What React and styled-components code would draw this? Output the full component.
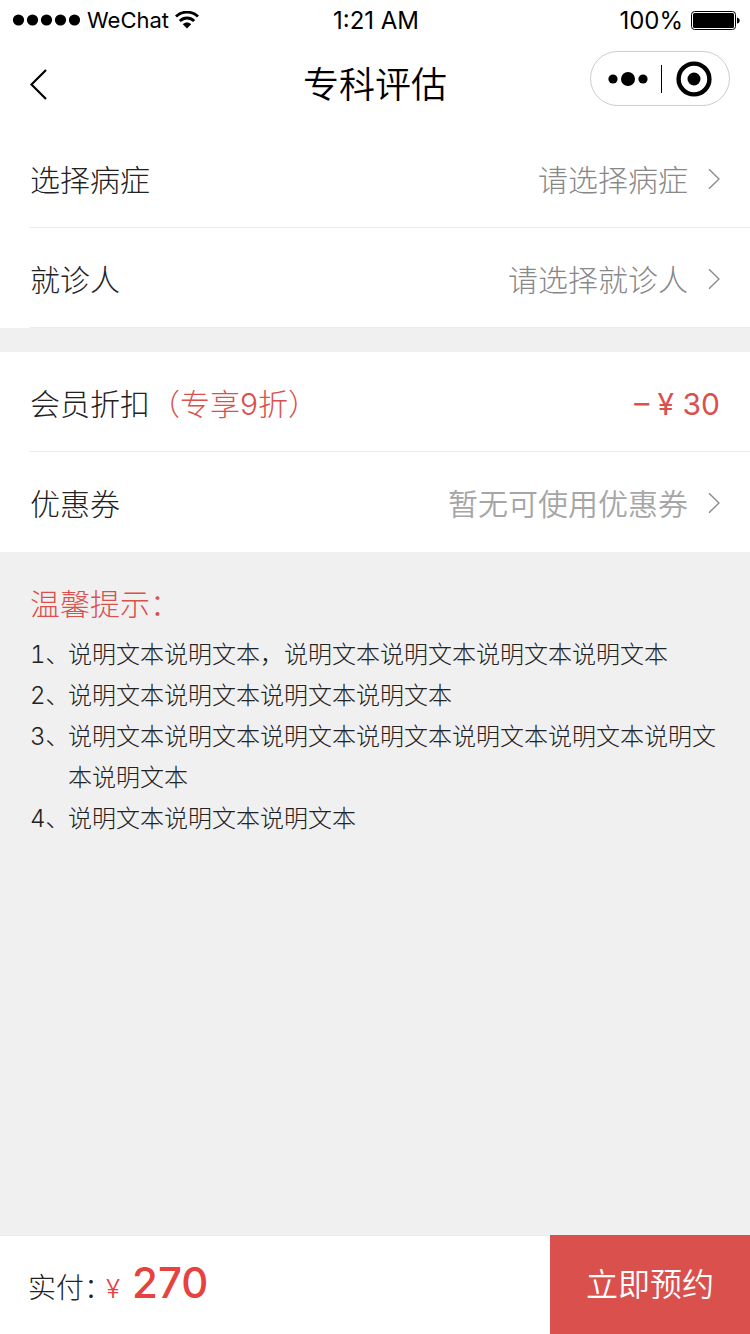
import React, { useState } from "react";
import styled, { createGlobalStyle } from "styled-components";

const GlobalStyle = createGlobalStyle`
  * {
    box-sizing: border-box;
  }
  body {
    margin: 0;
    background: #f0f0f0;
    color: #222;
    font-family: Inter, "Noto Sans CJK SC", sans-serif;
    font-weight: 300;
  }
  button,
  select {
    margin: 0;
    padding: 0;
    border: 0;
    background: none;
    color: inherit;
    font: inherit;
    cursor: pointer;
  }
`;

const Page = styled.div`
  display: flex;
  flex-direction: column;
  min-height: 100vh;
`;

const Header = styled.header`
  background: #fff;
  color: #000;
`;

const StatusBar = styled.div`
  display: grid;
  grid-template-columns: 1fr auto 1fr;
  align-items: center;
  height: 40px;
  padding: 0 10px 0 12px;
  font-size: 24px;
  font-weight: 400;
`;

const StatusGroup = styled.div`
  display: flex;
  align-items: center;
  justify-content: ${(props) => (props.$end ? "flex-end" : "flex-start")};
  gap: ${(props) => (props.$end ? "8px" : "6px")};
`;

const Carrier = styled.span`
  font-size: 22px;
`;

const NavBar = styled.nav`
  display: grid;
  grid-template-columns: 1fr auto 1fr;
  align-items: center;
  height: 88px;
  padding: 0 20px;
`;

const BackButton = styled.button`
  display: flex;
  justify-self: start;
  padding: 0 8px;
`;

const Title = styled.h1`
  margin: 0;
  padding-top: 2px;
  font-size: 36px;
  font-weight: 350;
  line-height: 48px;
`;

const Capsule = styled.div`
  display: flex;
  align-items: center;
  align-self: start;
  justify-self: end;
  width: 140px;
  height: 55px;
  margin-top: 11px;
  padding: 0 2px 0 4px;
  border: 1px solid #ccc;
  border-radius: 28px;
`;

const CapsuleButton = styled.button`
  display: flex;
  flex: 1;
  align-items: center;
  justify-content: center;
  height: 100%;
`;

const CapsuleLine = styled.span`
  width: 1px;
  height: 28px;
  background: #000;
`;

const Group = styled.section`
  margin-bottom: ${(props) => (props.$spaced ? "24px" : "0")};
  padding-left: 30px;
  background: #fff;
`;

const Row = styled.div`
  display: flex;
  align-items: center;
  height: 100px;
  padding: 4px 30px 0 0;
  border-bottom: ${(props) => (props.$last ? "0" : "1px solid #ebebeb")};
  font-size: 30px;
  line-height: 40px;
`;

const RowLabel = styled.label`
  flex: none;
`;

const Discount = styled.span`
  color: #d9504d;
`;

const Amount = styled.span`
  flex: 1;
  color: #d9504d;
  font-weight: 400;
  text-align: right;
`;

const Picker = styled.select`
  flex: 1;
  min-width: 0;
  margin-right: 20px;
  appearance: none;
  color: ${(props) => (props.$muted ? "#a6a6a6" : "#888")};
  font-weight: ${(props) => (props.$muted ? 350 : 300)};
  text-align-last: right;
`;

const Tips = styled.section`
  flex: 1;
  padding: 30px;
`;

const TipsTitle = styled.h2`
  margin: 0 0 8px;
  color: #d9504d;
  font-size: 30px;
  font-weight: 300;
  line-height: 44px;
`;

const TipList = styled.ol`
  margin: 0;
  padding: 0;
  list-style: none;
`;

const Tip = styled.li`
  display: flex;
  font-size: 24px;
  line-height: 41px;
`;

const TipNumber = styled.span`
  flex: none;
  width: 38px;
  font-variant-numeric: tabular-nums;
`;

const Footer = styled.footer`
  display: flex;
  height: 99px;
  background: #fff;
`;

const Total = styled.div`
  display: flex;
  flex: 1;
  align-items: baseline;
  padding: 21px 0 0 28px;
  border-top: 1px solid #ebebeb;
  font-size: 28px;
  line-height: 52px;
`;

const TotalLabel = styled.span`
  margin-right: 8px;
  font-feature-settings: "halt";
`;

const Currency = styled.span`
  margin-right: 12px;
  color: #e64340;
  font-size: 26px;
`;

const Price = styled.strong`
  color: #e64340;
  font-size: 42px;
  font-weight: 500;
`;

const SubmitButton = styled.button`
  flex: none;
  width: 200px;
  background: #d9504d;
  color: #fff;
  font-size: 32px;
  font-weight: 350;
  line-height: 44px;
`;

const SignalIcon = () => (
  <svg width="69" height="12" viewBox="0 0 69 12">
    {[6, 20, 34, 48, 62].map((cx) => (
      <circle key={cx} cx={cx + 0.5} cy="6" r="5.6" />
    ))}
  </svg>
);

const WifiIcon = () => (
  <svg width="24" height="18" viewBox="0 0 24 18" fill="none" stroke="#000">
    <path d="M1 5.6C7-0.4 17-0.4 23 5.6" strokeWidth="2.8" />
    <path d="M4.8 10C9 6 15 6 19.2 10" strokeWidth="2.8" />
    <path d="M7.8 13.2C10 11 14 11 16.2 13.2L12 17.6Z" fill="#000" stroke="none" />
  </svg>
);

const BatteryIcon = () => (
  <svg width="49" height="20" viewBox="0 0 49 20">
    <rect x="0.5" y="1.5" width="44" height="18" rx="3" fill="none" stroke="#000" />
    <rect x="2" y="3" width="41" height="15" rx="1.5" />
    <path d="M46 7.4C49.6 8 49.6 13 46 13.6Z" />
  </svg>
);

const BackIcon = () => (
  <svg width="20" height="32" viewBox="0 0 20 32" fill="none">
    <path d="M18 2L3.5 16.5L18 31" stroke="#000" strokeWidth="2.2" />
  </svg>
);

const MoreIcon = () => (
  <svg width="40" height="16" viewBox="0 0 40 16">
    <circle cx="5" cy="8" r="4.6" />
    <circle cx="20" cy="8" r="7" />
    <circle cx="35" cy="8" r="4.6" />
  </svg>
);

const CloseIcon = () => (
  <svg width="36" height="36" viewBox="0 0 36 36">
    <circle cx="18" cy="18" r="15.4" fill="none" stroke="#000" strokeWidth="4.4" />
    <circle cx="18" cy="18" r="6.5" />
  </svg>
);

const ArrowIcon = () => (
  <svg width="12" height="22" viewBox="0 0 12 22" fill="none">
    <path d="M1 0.2L11 10L1 19.8" stroke="#888" strokeWidth="1.3" />
  </svg>
);

const PickerRow = ({ id, label, placeholder, muted, last }) => {
  const [value, setValue] = useState("");

  return (
    <Row $last={last}>
      <RowLabel htmlFor={id}>{label}</RowLabel>
      <Picker
        id={id}
        $muted={muted}
        value={value}
        onChange={(event) => setValue(event.target.value)}
      >
        <option value="">{placeholder}</option>
      </Picker>
      <ArrowIcon />
    </Row>
  );
};

const tips = [
  "说明文本说明文本，说明文本说明文本说明文本说明文本",
  "说明文本说明文本说明文本说明文本",
  "说明文本说明文本说明文本说明文本说明文本说明文本说明文本说明文本",
  "说明文本说明文本说明文本",
];

const App = () => {
  return (
    <Page>
      <GlobalStyle />
      <Header>
        <StatusBar>
          <StatusGroup>
            <SignalIcon />
            <Carrier>WeChat</Carrier>
            <WifiIcon />
          </StatusGroup>
          <span>1:21 AM</span>
          <StatusGroup $end>
            <span>100%</span>
            <BatteryIcon />
          </StatusGroup>
        </StatusBar>
        <NavBar>
          <BackButton type="button" aria-label="返回">
            <BackIcon />
          </BackButton>
          <Title>专科评估</Title>
          <Capsule>
            <CapsuleButton type="button" aria-label="更多">
              <MoreIcon />
            </CapsuleButton>
            <CapsuleLine />
            <CapsuleButton type="button" aria-label="关闭">
              <CloseIcon />
            </CapsuleButton>
          </Capsule>
        </NavBar>
      </Header>

      <Group $spaced>
        <PickerRow id="disease" label="选择病症" placeholder="请选择病症" />
        <PickerRow id="patient" label="就诊人" placeholder="请选择就诊人" />
      </Group>

      <Group>
        <Row>
          <span>
            会员折扣<Discount>（专享9折）</Discount>
          </span>
          <Amount>– ¥ 30</Amount>
        </Row>
        <PickerRow
          id="coupon"
          label="优惠券"
          placeholder="暂无可使用优惠券"
          muted
          last
        />
      </Group>

      <Tips>
        <TipsTitle>温馨提示：</TipsTitle>
        <TipList>
          {tips.map((tip, index) => (
            <Tip key={index}>
              <TipNumber>{index + 1}、</TipNumber>
              <span>{tip}</span>
            </Tip>
          ))}
        </TipList>
      </Tips>

      <Footer>
        <Total>
          <TotalLabel>实付：</TotalLabel>
          <Currency>¥</Currency>
          <Price>270</Price>
        </Total>
        <SubmitButton type="button">立即预约</SubmitButton>
      </Footer>
    </Page>
  );
};

export default App;
